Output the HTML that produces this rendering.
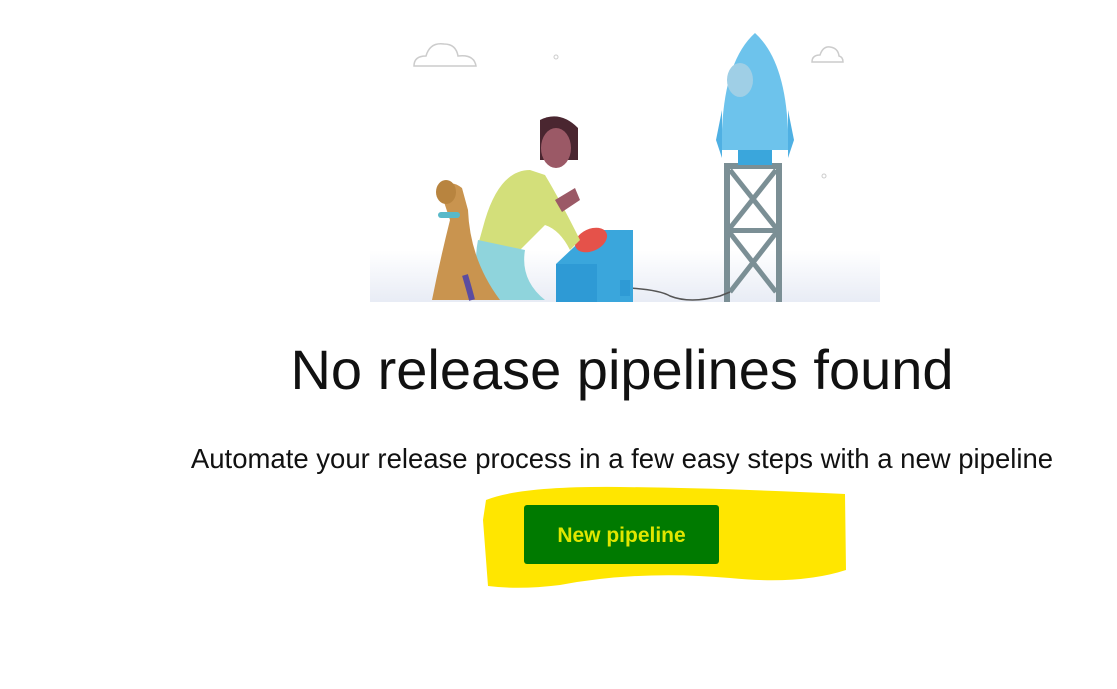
<!DOCTYPE html>
<html><head><meta charset="utf-8"><style>
html,body{margin:0;padding:0;background:#fff;width:1117px;height:689px;overflow:hidden;font-family:"Liberation Sans",sans-serif}
.h{position:absolute;left:0;width:1244px;top:337px;text-align:center;font-size:56px;color:#111;white-space:nowrap}
.s{position:absolute;left:0;width:1244px;top:443px;text-align:center;font-size:27.5px;color:#111;white-space:nowrap}
.btn{position:absolute;left:524px;top:505px;width:195px;height:59px;background:#007a00;border-radius:3px;color:#e0e600;font-weight:bold;font-size:21px;line-height:62px;text-align:center}
</style></head><body>
<svg width="1117" height="689" style="position:absolute;left:0;top:0">
<defs><linearGradient id="g" x1="0" y1="0" x2="0" y2="1"><stop offset="0" stop-color="#fff"/><stop offset="1" stop-color="#e8ecf5"/></linearGradient></defs>
<rect x="370" y="250" width="510" height="52" fill="url(#g)"/>
<path d="M414 66 q0-10 12-10 q4-14 18-12 q12 0 14 12 q16-2 18 10 z" fill="none" stroke="#ccc" stroke-width="1.5"/>
<path d="M812 62 q0-7 8-7 q3-9 10-8 q8 1 9 9 q4 1 4 6 z" fill="none" stroke="#ccc" stroke-width="1.5"/>
<circle cx="556" cy="57" r="2" fill="none" stroke="#ccc"/><circle cx="824" cy="176" r="2" fill="none" stroke="#ccc"/>
<rect x="724" y="165" width="6" height="137" fill="#7b8f95"/><rect x="776" y="165" width="6" height="137" fill="#7b8f95"/>
<rect x="724" y="163" width="58" height="6" fill="#7b8f95"/><rect x="724" y="228" width="58" height="5" fill="#7b8f95"/>
<path d="M730 170 L776 228 M776 170 L730 228 M730 233 L776 292 M776 233 L730 292" stroke="#7b8f95" stroke-width="5"/>
<path d="M755 33 Q785 60 788 130 L788 150 L722 150 L722 130 Q725 60 755 33 Z" fill="#6dc3ec"/>
<path d="M722 110 L716 140 L722 158 Z M788 110 L794 140 L788 158 Z" fill="#4fb0e3"/>
<rect x="738" y="150" width="34" height="15" fill="#3aa6dc"/>
<ellipse cx="740" cy="80" rx="13" ry="17" fill="#9fcfe6"/>
<path d="M630 288 Q660 290 670 296 Q690 304 720 296 L730 292" fill="none" stroke="#555" stroke-width="1.5"/>
<path d="M556 264 L592 230 L633 230 L633 302 L556 302 Z" fill="#3aa6dc"/>
<rect x="556" y="264" width="41" height="38" fill="#2e9ad5"/>
<rect x="620" y="280" width="10" height="16" fill="#2e9ad5"/>
<ellipse cx="591" cy="240" rx="17" ry="11" fill="#e5524a" transform="rotate(-25 591 240)"/>
<path d="M540 120 Q560 110 578 128 L578 160 L540 160 Z" fill="#4a2630"/>
<ellipse cx="556" cy="148" rx="15" ry="20" fill="#9b5966"/>
<path d="M530 170 Q500 170 485 220 L478 245 L520 250 L545 225 Q560 230 570 250 L580 240 Q560 200 545 175 Z" fill="#d3df7a"/>
<path d="M478 240 Q470 280 495 300 L545 300 Q520 280 525 250 Z" fill="#8fd4dc"/>
<path d="M555 200 L575 188 L580 200 L562 212 Z" fill="#9b5966"/>
<path d="M440 190 Q450 178 462 188 L468 210 Q470 260 500 300 L432 300 Q440 260 450 220 Z" fill="#c9944f"/>
<ellipse cx="446" cy="192" rx="10" ry="12" fill="#b8843f"/>
<rect x="438" y="212" width="22" height="6" rx="3" fill="#59b9c9"/>
<path d="M465 275 Q470 292 472 300" stroke="#5b4ca0" stroke-width="6" fill="none"/>
<path d="M486 500 Q520 486 620 487 Q720 488 845 494 L846 570 Q800 585 730 578 Q640 570 560 585 Q520 590 488 586 L483 520 Z" fill="#ffe600"/>
</svg>
<div class="h">No release pipelines found</div>
<div class="s">Automate your release process in a few easy steps with a new pipeline</div>
<div class="btn">New pipeline</div>
</body></html>
